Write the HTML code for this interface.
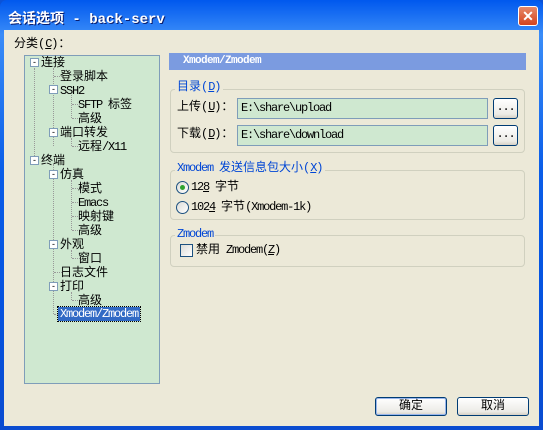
<!DOCTYPE html>
<html><head><meta charset="utf-8"><style>
*{margin:0;padding:0;box-sizing:border-box}
body{width:543px;height:430px;overflow:hidden;background:#0a52d8;font-family:"Liberation Mono","Noto Sans CJK SC",monospace;font-size:12px;position:relative}
.win{position:absolute;left:0;top:0;width:543px;height:430px;border-radius:7px 7px 0 0;background:linear-gradient(#0058ee,#3a8cf8 8%,#0a5de8 40%,#0553e0 70%,#0a4cd0);}
.title{position:absolute;left:8px;top:8px;color:#fff;font-weight:bold;font-size:14px;font-family:"Liberation Mono","Noto Sans CJK SC",monospace;text-shadow:1px 1px #0a1f70}
.close{position:absolute;left:518px;top:6px;width:20px;height:20px;border:1px solid #fff;border-radius:3px;background:linear-gradient(#e6896a,#d5431c);color:#fff;font:bold 14px "Liberation Sans",sans-serif;text-align:center;line-height:18px}
.body{position:absolute;left:4px;top:30px;width:535px;height:396px;background:#ece9d8}
.a{position:absolute;white-space:nowrap;font-family:"Liberation Mono","Noto Sans CJK SC",monospace;font-size:12px;color:#000;line-height:16px}
.l{font-size:12px;letter-spacing:-1.2px}
.tree{position:absolute;left:20px;top:25px;width:136px;height:329px;background:#cfe8d0;border:1px solid #7f9db9}
.ex{position:absolute;width:9px;height:9px;border:1px solid #7f9db9;background:#fff;font-size:9px;line-height:6px;text-align:center;font-family:"Liberation Sans",sans-serif;letter-spacing:0}
.dv{position:absolute;border-left:1px dotted #999}
.dh{position:absolute;border-top:1px dotted #999;width:8px}
.hdr{position:absolute;left:165px;top:23px;width:357px;height:17px;background:#7b9be0;color:#fff;font-weight:bold;padding-left:14px;line-height:17px;font-size:11px;letter-spacing:-0.6px}
.grp{position:absolute;border:1px solid #d0d0bf;border-radius:4px}
.gl{position:absolute;background:#ece9d8;color:#0046d5;padding:0 2px}
.inp{position:absolute;height:21px;background:#cfe8d0;border:1px solid #7f9db9;padding:2px 3px;line-height:15px;font-size:12px;letter-spacing:-1.2px}
.btn{position:absolute;border:1px solid #003c74;border-radius:3px;background:linear-gradient(#fff,#ecebe6 80%,#d6d0c5);text-align:center}
.rad{position:absolute;width:13px;height:13px;border-radius:50%;border:1px solid #1c5180;background:linear-gradient(135deg,#dcdcd7,#fff)}
</style></head><body>
<div class="win">
<div class="title">会话选项 - back-serv</div>
<div class="close">✕</div>
<div class="body">
<div class="a" style="left:10px;top:6px">分类(<u class="l">C</u>)：</div>
<div class="tree">
 <div class="dv" style="left:9px;top:12px;height:90px"></div>
 <div class="dv" style="left:28px;top:12px;height:78px"></div>
 <div class="dv" style="left:28px;top:108px;height:150px"></div>
 <div class="dv" style="left:46px;top:39px;height:23px"></div>
 <div class="dv" style="left:46px;top:82px;height:8px"></div>
 <div class="dv" style="left:46px;top:124px;height:50px"></div>
 <div class="dv" style="left:46px;top:194px;height:8px"></div>
 <div class="dv" style="left:46px;top:236px;height:8px"></div>
 <div class="ex" style="left:5px;top:2px">-</div><div class="a" style="left:16px;top:-1px">连接</div>
 <div class="dh" style="left:29px;top:20px"></div><div class="a" style="left:35px;top:13px">登录脚本</div>
 <div class="ex" style="left:24px;top:29px">-</div><div class="a l" style="left:35px;top:27px">SSH2</div>
 <div class="dh" style="left:47px;top:48px"></div><div class="a" style="left:53px;top:41px"><span class="l">SFTP </span>标签</div>
 <div class="dh" style="left:47px;top:62px"></div><div class="a" style="left:53px;top:55px">高级</div>
 <div class="ex" style="left:24px;top:72px">-</div><div class="a" style="left:35px;top:69px">端口转发</div>
 <div class="dh" style="left:47px;top:90px"></div><div class="a" style="left:53px;top:83px">远程<span class="l">/X11</span></div>
 <div class="ex" style="left:5px;top:100px">-</div><div class="a" style="left:16px;top:97px">终端</div>
 <div class="ex" style="left:24px;top:114px">-</div><div class="a" style="left:35px;top:111px">仿真</div>
 <div class="dh" style="left:47px;top:132px"></div><div class="a" style="left:53px;top:125px">模式</div>
 <div class="dh" style="left:47px;top:146px"></div><div class="a l" style="left:53px;top:139px">Emacs</div>
 <div class="dh" style="left:47px;top:160px"></div><div class="a" style="left:53px;top:153px">映射键</div>
 <div class="dh" style="left:47px;top:174px"></div><div class="a" style="left:53px;top:167px">高级</div>
 <div class="ex" style="left:24px;top:184px">-</div><div class="a" style="left:35px;top:181px">外观</div>
 <div class="dh" style="left:47px;top:202px"></div><div class="a" style="left:53px;top:195px">窗口</div>
 <div class="dh" style="left:29px;top:216px"></div><div class="a" style="left:35px;top:209px">日志文件</div>
 <div class="ex" style="left:24px;top:226px">-</div><div class="a" style="left:35px;top:223px">打印</div>
 <div class="dh" style="left:47px;top:244px"></div><div class="a" style="left:53px;top:237px">高级</div>
 <div class="dh" style="left:29px;top:258px"></div><div class="a l" style="left:33px;top:251px;background:#316ac5;color:#fff;outline:1px dotted #000;padding:0 2px;line-height:14px">Xmodem/Zmodem</div>
</div>
<div class="hdr">Xmodem/Zmodem</div>
<div class="grp" style="left:166px;top:59px;width:355px;height:64px"></div>
<div class="gl a" style="left:171px;top:49px;color:#0046d5">目录(<u class="l">D</u>)</div>
<div class="a" style="left:173px;top:69px">上传(<u class="l">U</u>)：</div>
<div class="inp" style="left:233px;top:68px;width:251px">E:\share\upload</div>
<div class="btn l" style="left:489px;top:68px;width:25px;height:21px;line-height:16px">...</div>
<div class="a" style="left:173px;top:96px">下载(<u class="l">D</u>)：</div>
<div class="inp" style="left:233px;top:95px;width:251px">E:\share\download</div>
<div class="btn l" style="left:489px;top:95px;width:25px;height:21px;line-height:16px">...</div>
<div class="grp" style="left:166px;top:140px;width:355px;height:50px"></div>
<div class="gl a" style="left:171px;top:130px;color:#0046d5"><span class="l">Xmodem </span>发送信息包大小(<u class="l">X</u>)</div>
<div class="rad" style="left:172px;top:151px"><div style="position:absolute;left:3px;top:3px;width:5px;height:5px;border-radius:50%;background:#2fa32f"></div></div>
<div class="a" style="left:187px;top:149px"><span class="l">12<u>8</u> </span>字节</div>
<div class="rad" style="left:172px;top:171px"></div>
<div class="a" style="left:187px;top:169px"><span class="l">102<u>4</u> </span>字节<span class="l">(Xmodem-1k)</span></div>
<div class="grp" style="left:166px;top:205px;width:355px;height:32px"></div>
<div class="gl a l" style="left:171px;top:196px;color:#0046d5">Zmodem</div>
<div style="position:absolute;left:176px;top:214px;width:13px;height:13px;border:1px solid #1c5180;background:linear-gradient(135deg,#dcdcd7,#fff)"></div>
<div class="a" style="left:192px;top:212px">禁用<span class="l"> Zmodem(<u>Z</u>)</span></div>
<div class="btn" style="left:371px;top:367px;width:72px;height:19px;line-height:16px;box-shadow:inset 0 0 0 1px #99b6ec">确定</div>
<div class="btn" style="left:453px;top:367px;width:72px;height:19px;line-height:16px">取消</div>
</div>
</div>
</body></html>
